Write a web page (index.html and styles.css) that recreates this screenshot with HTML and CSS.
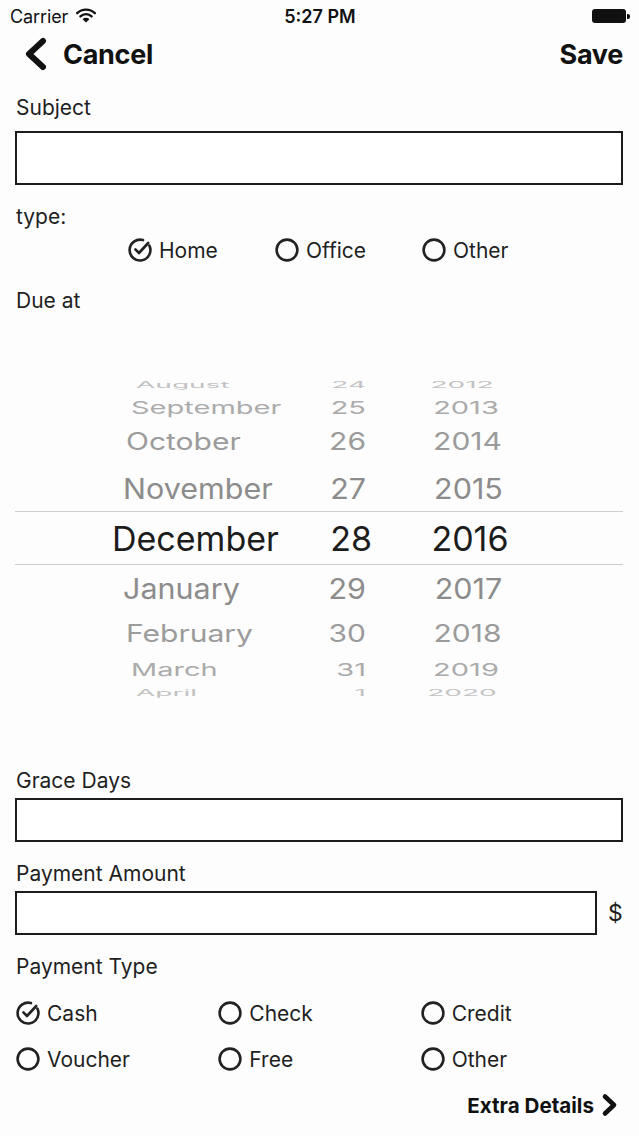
FILE: index.html
```html
<!DOCTYPE html>
<html lang="en">
<head>
<meta charset="utf-8">
<title>Edit Bill</title>
<link rel="stylesheet" href="styles.css">
</head>
<body>
<div class="screen">
  <div class="status">
    <div class="carrier">Carrier
      <svg class="wifi" width="20" height="15" viewBox="0 0 20 15">
        <path d="M1.2 5.2 A12.5 12.5 0 0 1 18.8 5.2" fill="none" stroke="#111" stroke-width="2.4" stroke-linecap="round"/>
        <path d="M4.4 8.4 A8 8 0 0 1 15.6 8.4" fill="none" stroke="#111" stroke-width="2.4" stroke-linecap="round"/>
        <path d="M10 14.5 L6.6 11.2 A4.8 4.8 0 0 1 13.4 11.2 Z" fill="#111"/>
      </svg>
    </div>
    <div class="time">5:27 PM</div>
    <div class="battery"><span class="bat-body"></span><span class="bat-nub"></span></div>
  </div>

  <div class="nav">
    <div class="nav-back">
      <svg width="24" height="34" viewBox="0 0 24 34"><polyline points="19,4 5,17 19,30" fill="none" stroke="#111" stroke-width="6" stroke-linecap="round" stroke-linejoin="round"/></svg>
      <span>Cancel</span>
    </div>
    <div class="nav-save">Save</div>
  </div>

  <div class="form">
    <div class="label label-subject">Subject</div>
    <div class="field field-tall"></div>

    <div class="label label-type">type:</div>
    <div class="type-row">
      <div class="radio">
        <svg class="ico" width="24" height="24" viewBox="0 0 24 24"><path d="M21.4 7.6 A10.4 10.4 0 1 1 15 2.1" fill="none" stroke="#222" stroke-width="2.6" stroke-linecap="round"/><polyline points="7.4,11.4 11,15 20.2,5" fill="none" stroke="#222" stroke-width="2.6" stroke-linecap="round" stroke-linejoin="round"/></svg>
        <span>Home</span>
      </div>
      <div class="radio">
        <svg class="ico" width="24" height="24" viewBox="0 0 24 24"><circle cx="12" cy="12" r="10.4" fill="none" stroke="#222" stroke-width="2.6"/></svg>
        <span>Office</span>
      </div>
      <div class="radio">
        <svg class="ico" width="24" height="24" viewBox="0 0 24 24"><circle cx="12" cy="12" r="10.4" fill="none" stroke="#222" stroke-width="2.6"/></svg>
        <span>Other</span>
      </div>
    </div>

    <div class="label label-due">Due at</div>

    <div class="picker">
      <div class="prow d4 top"><div class="pm"><span>August</span></div><div class="pd"><span>24</span></div><div class="py"><span>2012</span></div></div>
      <div class="prow d3 top"><div class="pm"><span>September</span></div><div class="pd"><span>25</span></div><div class="py"><span>2013</span></div></div>
      <div class="prow d2 top"><div class="pm"><span>October</span></div><div class="pd"><span>26</span></div><div class="py"><span>2014</span></div></div>
      <div class="prow d1 top"><div class="pm"><span>November</span></div><div class="pd"><span>27</span></div><div class="py"><span>2015</span></div></div>
      <div class="prow sel"><div class="pm"><span>December</span></div><div class="pd"><span>28</span></div><div class="py"><span>2016</span></div></div>
      <div class="prow d1 bot"><div class="pm"><span>January</span></div><div class="pd"><span>29</span></div><div class="py"><span>2017</span></div></div>
      <div class="prow d2 bot"><div class="pm"><span>February</span></div><div class="pd"><span>30</span></div><div class="py"><span>2018</span></div></div>
      <div class="prow d3 bot"><div class="pm"><span>March</span></div><div class="pd"><span>31</span></div><div class="py"><span>2019</span></div></div>
      <div class="prow d4 bot"><div class="pm"><span>April</span></div><div class="pd"><span>1</span></div><div class="py"><span>2020</span></div></div>
    </div>

    <div class="label label-grace">Grace Days</div>
    <div class="field field-short"></div>

    <div class="label label-amount">Payment Amount</div>
    <div class="amount-row">
      <div class="field field-short field-grow"></div>
      <span class="dollar">$</span>
    </div>

    <div class="label label-ptype">Payment Type</div>
    <div class="pay-grid">
      <div class="radio">
        <svg class="ico" width="24" height="24" viewBox="0 0 24 24"><path d="M21.4 7.6 A10.4 10.4 0 1 1 15 2.1" fill="none" stroke="#222" stroke-width="2.6" stroke-linecap="round"/><polyline points="7.4,11.4 11,15 20.2,5" fill="none" stroke="#222" stroke-width="2.6" stroke-linecap="round" stroke-linejoin="round"/></svg>
        <span>Cash</span>
      </div>
      <div class="radio">
        <svg class="ico" width="24" height="24" viewBox="0 0 24 24"><circle cx="12" cy="12" r="10.4" fill="none" stroke="#222" stroke-width="2.6"/></svg>
        <span>Check</span>
      </div>
      <div class="radio">
        <svg class="ico" width="24" height="24" viewBox="0 0 24 24"><circle cx="12" cy="12" r="10.4" fill="none" stroke="#222" stroke-width="2.6"/></svg>
        <span>Credit</span>
      </div>
      <div class="radio">
        <svg class="ico" width="24" height="24" viewBox="0 0 24 24"><circle cx="12" cy="12" r="10.4" fill="none" stroke="#222" stroke-width="2.6"/></svg>
        <span>Voucher</span>
      </div>
      <div class="radio">
        <svg class="ico" width="24" height="24" viewBox="0 0 24 24"><circle cx="12" cy="12" r="10.4" fill="none" stroke="#222" stroke-width="2.6"/></svg>
        <span>Free</span>
      </div>
      <div class="radio">
        <svg class="ico" width="24" height="24" viewBox="0 0 24 24"><circle cx="12" cy="12" r="10.4" fill="none" stroke="#222" stroke-width="2.6"/></svg>
        <span>Other</span>
      </div>
    </div>

    <div class="extra">
      <span>Extra Details</span>
      <svg width="17" height="24" viewBox="0 0 17 24"><polyline points="4,3.5 13,12 4,20.5" fill="none" stroke="#111" stroke-width="4.6" stroke-linecap="round" stroke-linejoin="round"/></svg>
    </div>
  </div>
</div>
</body>
</html>
```

FILE: styles.css
```css
* { box-sizing: border-box; }
html, body { margin: 0; padding: 0; background: #fdfdfd; }
body { font-family: Inter, "Noto Sans", "Liberation Sans", sans-serif; color: #1f1f1f; }
.screen { width: 639px; height: 1136px; overflow: hidden; background: #fdfdfd; }

.status { height: 32px; display: grid; grid-template-columns: 1fr auto 1fr; align-items: center; padding: 0 9px 0 10px; }
.carrier { font-size: 18px; color: #111; display: flex; align-items: center; gap: 8px; letter-spacing: -0.1px; }
.wifi { display: block; margin-top: -2px; }
.time { font-size: 18px; font-weight: 600; color: #111; }
.battery { justify-self: end; display: flex; align-items: center; }
.bat-body { width: 34px; height: 14px; background: #111; border-radius: 3px; display: block; }
.bat-nub { width: 3px; height: 5px; background: #111; border-radius: 0 2px 2px 0; display: block; margin-left: 1px; }

.nav { height: 44px; display: flex; align-items: center; justify-content: space-between; padding: 0 16px 0 24px; }
.nav-back { display: flex; align-items: center; gap: 15px; font-size: 27px; font-weight: 700; color: #111; letter-spacing: -0.3px; }
.nav-back svg { display: block; }
.nav-save { font-size: 27px; font-weight: 700; color: #111; letter-spacing: -0.3px; }

.form { padding: 0 16px 0 15px; }
.label { height: 24px; line-height: 24px; font-size: 21px; color: #1f1f1f; padding-left: 1px; }
.label-subject { margin-top: 20px; }
.field { border: 2px solid #1c1c1c; background: #fff; }
.field-tall { height: 54px; margin-top: 11px; }
.label-type { margin-top: 20px; }

.radio { display: flex; align-items: center; gap: 7px; height: 24px; font-size: 21px; color: #1f1f1f; }
.radio .ico { display: block; flex: none; }
.type-row { display: grid; grid-template-columns: repeat(3, 147px); margin: 9px 0 0 113px; }

.label-due { margin-top: 27px; }

.picker { margin-top: 60px; }
.prow { display: grid; grid-template-columns: 290px 61px 200px; align-items: center; white-space: nowrap; }
.prow span { display: inline-block; }
.pd { text-align: right; }
.py { text-align: center; }

.sel { height: 54px; border-top: 1px solid #cfcfcf; border-bottom: 1px solid #cfcfcf; font-size: 34px; color: #1c1c1c; }
.sel .pm { padding-left: 97px; }
.sel .pd span { margin-right: -6px; }
.sel .py { padding-left: 8px; }

.d1 { height: 46px; font-size: 30.5px; color: #8c8c8c; }
.d1 span { transform: scaleY(0.93); }
.d1 .pm { padding-left: 108px; }
.d1 .py { padding-left: 5px; }

.d2 { height: 46px; font-size: 30px; color: #9b9b9b; }
.d2 span { transform: translateY(-1px) scaleY(0.8); }
.d2 .pm { padding-left: 111px; }
.d2 .py { padding-left: 3px; }

.d3 { height: 24px; font-size: 29px; color: #ababab; }
.d3 span { transform: translateY(-5px) scaleY(0.6); }
.d3 .pm { padding-left: 116px; }
.d3 .py { padding-left: 0; }

.d4 { height: 22px; font-size: 28px; color: #c2c2c2; }
.d4 span { transform: translateY(-5px) scaleY(0.3); }
.d4 .pm { padding-left: 121px; }
.d4 .py { padding-left: 0; margin-left: -8px; }

.label-grace { margin-top: 66px; }
.field-short { height: 44px; margin-top: 5px; }
.label-amount { margin-top: 20px; }
.amount-row { display: flex; align-items: center; gap: 11px; margin-top: 5px; }
.amount-row .field-grow { flex: 1; margin-top: 0; }
.dollar { font-size: 23px; color: #1f1f1f; width: 15px; }

.label-ptype { margin-top: 20px; }
.pay-grid { display: grid; grid-template-columns: repeat(3, 1fr); row-gap: 22px; margin-top: 22px; padding-left: 1px; }

.extra { display: flex; justify-content: flex-end; align-items: center; gap: 7px; height: 24px; margin-top: 22px; font-size: 20.6px; font-weight: 700; color: #111; padding-right: 5px; }
.extra svg { display: block; }
```
